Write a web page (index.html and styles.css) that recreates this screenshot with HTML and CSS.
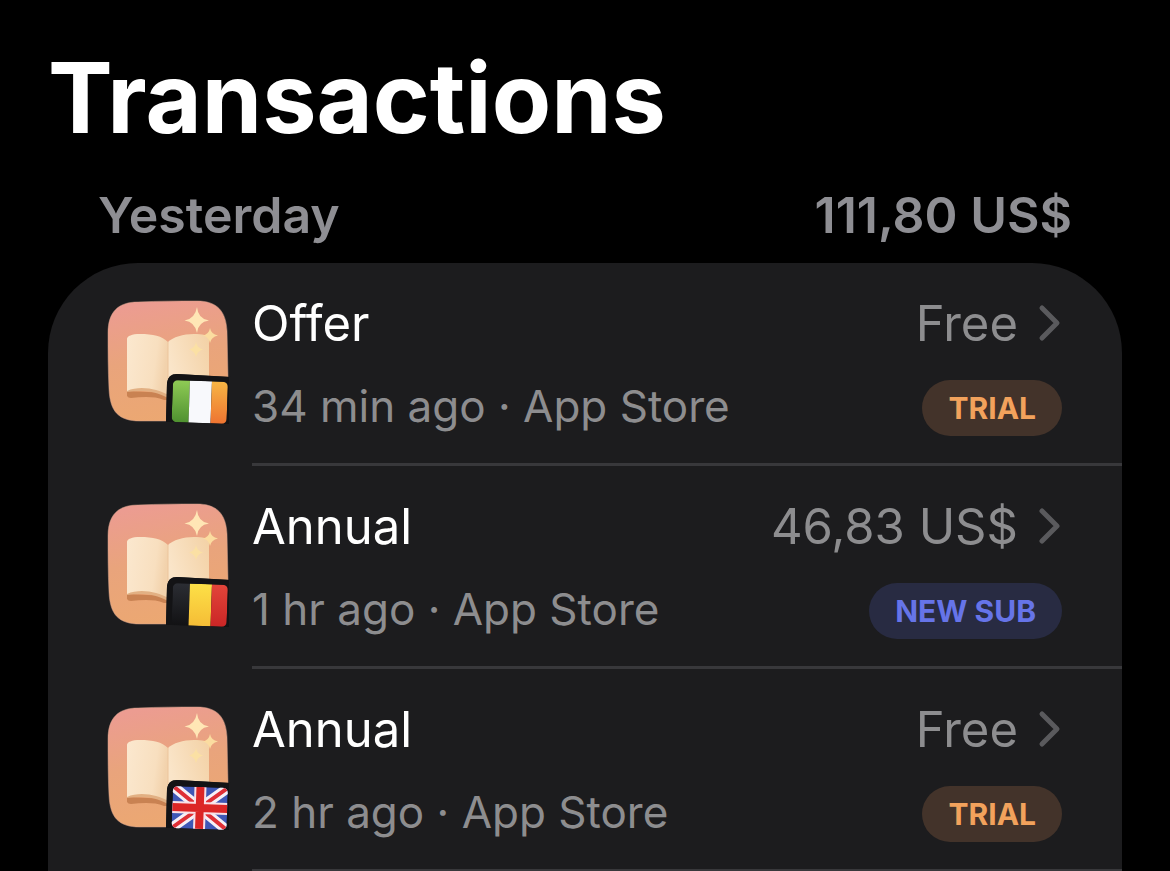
FILE: index.html
```html
<!DOCTYPE html>
<html lang="en">
<head>
    <meta charset="UTF-8">
    <title>Transactions</title>
    <meta name="viewport" content="width=device-width, initial-scale=1.0">
    <link rel="stylesheet" href="styles.css">
</head>
<body>

<!-- Shared drawings: app icon, flags, chevron -->
<svg class="sprite" width="0" height="0" aria-hidden="true">
    <defs>
        <linearGradient id="tileFill" x1="0.4" y1="0" x2="0.6" y2="1">
            <stop offset="0" stop-color="#ec9c91"/>
            <stop offset="0.45" stop-color="#e9a47c"/>
            <stop offset="1" stop-color="#eca871"/>
        </linearGradient>
        <linearGradient id="pageLeft" x1="0" y1="0" x2="1" y2="0.2">
            <stop offset="0" stop-color="#fbe8cf"/>
            <stop offset="0.75" stop-color="#f8dfbf"/>
            <stop offset="1" stop-color="#f2d2ac"/>
        </linearGradient>
        <linearGradient id="pageRight" x1="0" y1="0.4" x2="1" y2="0">
            <stop offset="0" stop-color="#fae5c9"/>
            <stop offset="1" stop-color="#f3d1a5"/>
        </linearGradient>
        <linearGradient id="ieGreen" x1="0" y1="0" x2="0" y2="1">
            <stop offset="0" stop-color="#8fcb55"/>
            <stop offset="1" stop-color="#4f9130"/>
        </linearGradient>
        <linearGradient id="ieOrange" x1="0" y1="0" x2="0" y2="1">
            <stop offset="0" stop-color="#f7b544"/>
            <stop offset="1" stop-color="#ee7431"/>
        </linearGradient>
        <linearGradient id="beYellow" x1="0" y1="0" x2="0" y2="1">
            <stop offset="0" stop-color="#fde047"/>
            <stop offset="1" stop-color="#f5bd36"/>
        </linearGradient>
        <linearGradient id="beRed" x1="0" y1="0" x2="0" y2="1">
            <stop offset="0" stop-color="#e2453a"/>
            <stop offset="1" stop-color="#cb2626"/>
        </linearGradient>
        <linearGradient id="beBlack" x1="0" y1="0" x2="0" y2="1">
            <stop offset="0" stop-color="#2b2d33"/>
            <stop offset="1" stop-color="#121214"/>
        </linearGradient>
        <clipPath id="flagClip"><rect width="55" height="42" rx="5"/></clipPath>

        <symbol id="appIcon" viewBox="0 0 128 128">
            <path d="M34 3C55 2 75 2 93 2C113 2 122 12 123 32L124 78L122 122H36C14 122 6 112 5 90C4 70 4 52 4 34C4 13 14 3 34 3Z" fill="url(#tileFill)" stroke="#d3a08c" stroke-width="0.500"/>
            <path d="M23 92V97Q24 99 27 99C38 98 50 97 60 101L65 101V94Z" fill="#c98252"/>
            <path d="M23 93C36 91 50 91 64 99V94L44 86L23 91Z" fill="#e2b083"/>
            <path d="M23 40C23 37 28 35 36 35C49 35 58 37 64 43V96C54 90 36 86 23 92Z" fill="url(#pageLeft)"/>
            <path d="M64 43C69 38 79 35 90 35C98 35 105 36 105 40V92H64Z" fill="url(#pageRight)"/>
            <path d="M64 43V80" stroke="#ecc59c" stroke-width="1"/>
            <path d="M93 8Q94 20 105 21.500Q94 23 93 34Q91 23 80.500 21.500Q91 20 93 8Z" fill="#ffe6b5"/>
            <path d="M106 29Q107 35 114 36.500Q107 38 106 44Q105 38 99 36.500Q105 35 106 29Z" fill="#fbdca0"/>
            <path d="M92 43Q93 49 99 50.500Q93 52 92 58Q91 52 85 50.500Q91 49 92 43Z" fill="#fbe0a4"/>
            <path d="M62 123L63 84Q64 75 73 75L128 78V128H62Z" fill="#1c1c1e"/>
            <path d="M62 123L63 84Q64 75 73 75L125 78V125L68 123Z" fill="#131315"/>
        </symbol>

        <symbol id="flagIe" viewBox="0 0 128 128">
            <g transform="translate(69 81) rotate(2)" clip-path="url(#flagClip)">
                <rect width="17" height="42" fill="url(#ieGreen)"/>
                <rect x="17" width="22" height="42" fill="#f8f9fc"/>
                <rect x="39" width="16" height="42" fill="url(#ieOrange)"/>
            </g>
        </symbol>

        <symbol id="flagBe" viewBox="0 0 128 128">
            <g transform="translate(69 81) rotate(2)" clip-path="url(#flagClip)">
                <rect width="17" height="42" fill="url(#beBlack)"/>
                <rect x="17" width="22" height="42" fill="url(#beYellow)"/>
                <rect x="39" width="16" height="42" fill="url(#beRed)"/>
            </g>
        </symbol>

        <symbol id="flagGb" viewBox="0 0 128 128">
            <g transform="translate(69 81) rotate(2)" clip-path="url(#flagClip)">
                <rect width="55" height="42" fill="#3f57b5"/>
                <path d="M0 0L55 42M55 0L0 42" stroke="#f6f0f6" stroke-width="10"/>
                <path d="M0 0L55 42M55 0L0 42" stroke="#df2f36" stroke-width="4"/>
                <path d="M27.500 0V42M0 21H55" stroke="#f9e0e6" stroke-width="12"/>
                <path d="M27.500 0V42M0 21H55" stroke="#dc2626" stroke-width="8"/>
            </g>
        </symbol>

        <symbol id="chevron" viewBox="0 0 24 40">
            <path d="M4 4L19 19L4 34" fill="none" stroke="#5a5a5d" stroke-width="5" stroke-linecap="round" stroke-linejoin="round"/>
        </symbol>
    </defs>
</svg>

<main class="page">
    <h1 class="title">Transactions</h1>

    <section>
        <div class="day-header">
            <h2 class="day-name">Yesterday</h2>
            <span class="day-total">111,80 US$</span>
        </div>

        <ul class="card">
            <li>
                <a class="row" href="#">
                    <svg class="app-icon" aria-hidden="true"><use href="#appIcon"/><use href="#flagIe"/></svg>
                    <div class="row-body">
                        <div class="line line-main">
                            <span class="name">Offer</span>
                            <span class="amount">Free</span>
                            <svg class="chevron" aria-hidden="true"><use href="#chevron"/></svg>
                        </div>
                        <div class="line line-sub">
                            <span class="meta">34 min ago · App Store</span>
                            <span class="badge badge-trial">TRIAL</span>
                        </div>
                    </div>
                </a>
            </li>
            <li>
                <a class="row" href="#">
                    <svg class="app-icon" aria-hidden="true"><use href="#appIcon"/><use href="#flagBe"/></svg>
                    <div class="row-body">
                        <div class="line line-main">
                            <span class="name">Annual</span>
                            <span class="amount">46,83 US$</span>
                            <svg class="chevron" aria-hidden="true"><use href="#chevron"/></svg>
                        </div>
                        <div class="line line-sub">
                            <span class="meta">1 hr ago · App Store</span>
                            <span class="badge badge-new">NEW SUB</span>
                        </div>
                    </div>
                </a>
            </li>
            <li>
                <a class="row" href="#">
                    <svg class="app-icon" aria-hidden="true"><use href="#appIcon"/><use href="#flagGb"/></svg>
                    <div class="row-body">
                        <div class="line line-main">
                            <span class="name">Annual</span>
                            <span class="amount">Free</span>
                            <svg class="chevron" aria-hidden="true"><use href="#chevron"/></svg>
                        </div>
                        <div class="line line-sub">
                            <span class="meta">2 hr ago · App Store</span>
                            <span class="badge badge-trial">TRIAL</span>
                        </div>
                    </div>
                </a>
            </li>
        </ul>
    </section>
</main>

</body>
</html>
```

FILE: styles.css
```css
* {
    box-sizing: border-box;
}

body {
    margin: 0;
    background-color: #000;
    color: #fff;
    font-family: Inter, "Liberation Sans", sans-serif;
}

.sprite {
    position: absolute;
}

.page {
    padding: 38px 48px 0;
}

.title {
    margin: 0;
    font-size: 97px;
    line-height: 120px;
    font-weight: 700;
}

.day-header {
    display: flex;
    justify-content: space-between;
    padding: 27px 50px 18px;
    color: #8e8e93;
    font-size: 50px;
    line-height: 60px;
    font-weight: 600;
}

.day-name {
    margin: 0;
    font-size: inherit;
    font-weight: inherit;
}

.card {
    margin: 0;
    padding: 0;
    list-style: none;
    background-color: #1c1c1e;
    border-radius: 90px 90px 0 0;
}

.row {
    display: flex;
    gap: 20px;
    padding-left: 56px;
    color: inherit;
    text-decoration: none;
}

.app-icon {
    flex: none;
    width: 128px;
    height: 128px;
    margin-top: 36px;
}

.row-body {
    flex: 1;
    display: flex;
    flex-direction: column;
    gap: 26px;
    padding: 31px 60px 27px 0;
    border-bottom: 3px solid #38383b;
}

.line {
    display: flex;
    align-items: center;
}

.line-main {
    font-size: 49px;
    line-height: 60px;
}

.line-sub {
    align-items: flex-start;
    font-size: 44px;
    line-height: 52px;
}

.name,
.meta {
    flex: 1;
}

.amount,
.meta {
    color: #8d8d8f;
}

.chevron {
    width: 24px;
    height: 40px;
    margin-left: 20px;
}

.badge {
    padding: 0 26px;
    border-radius: 28px;
    font-size: 30px;
    line-height: 56px;
    font-weight: 700;
}

.badge-trial {
    background-color: #43332a;
    color: #f2a25c;
}

.badge-new {
    background-color: #282b42;
    color: #6674e8;
}
```
